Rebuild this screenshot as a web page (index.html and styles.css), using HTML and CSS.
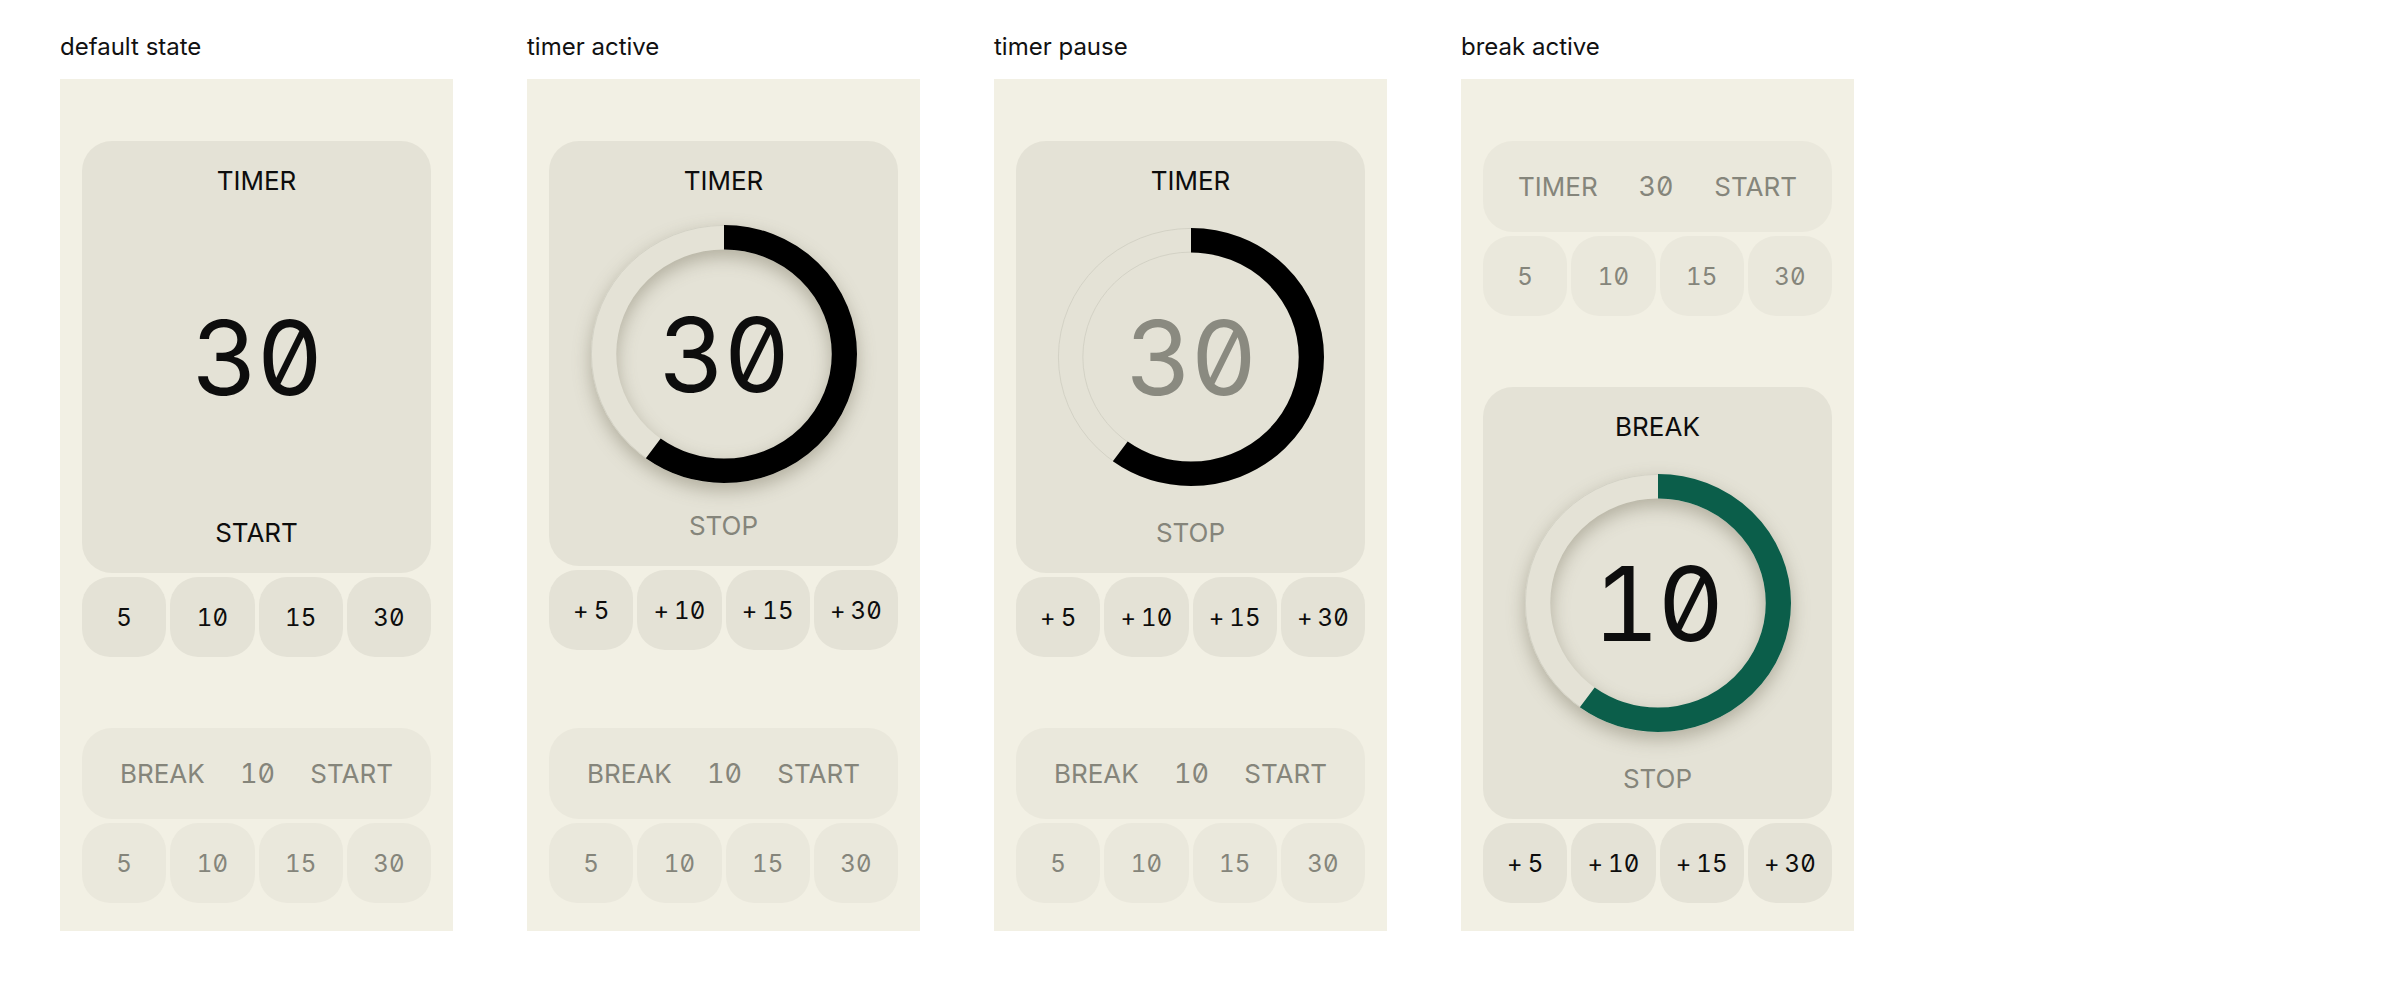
FILE: index.html
```html
<!DOCTYPE html>
<html lang="en">
<head>
<meta charset="utf-8">
<title>Timer states</title>
<link rel="stylesheet" href="styles.css">
</head>
<body>
<div class="board">

  <section class="state">
    <h2 class="label">default state</h2>
    <div class="panel">
      <div class="group">
        <div class="card">
          <div class="title">TIMER</div>
          <div class="body"><span class="big">30</span></div>
          <div class="action">START</div>
        </div>
        <div class="presets">
          <div class="preset">5</div><div class="preset">10</div><div class="preset">15</div><div class="preset">30</div>
        </div>
      </div>
      <div class="group bottom">
        <div class="bar faded"><span>BREAK</span><span class="num">10</span><span>START</span></div>
        <div class="presets faded">
          <div class="preset">5</div><div class="preset">10</div><div class="preset">15</div><div class="preset">30</div>
        </div>
      </div>
    </div>
  </section>

  <section class="state">
    <h2 class="label">timer active</h2>
    <div class="panel">
      <div class="group">
        <div class="card short">
          <div class="title">TIMER</div>
          <div class="body">
            <div class="dial">
              <svg class="ring raised" viewBox="0 0 258 258" preserveAspectRatio="none">
                <circle class="track" cx="129" cy="129" r="116.75"/>
                <circle class="edge" cx="129" cy="129" r="128.6"/>
                <circle class="arc" cx="129" cy="129" r="116.75" pathLength="100" transform="rotate(-90 129 129)"/>
              </svg>
              <span class="big">30</span>
            </div>
          </div>
          <div class="action muted">STOP</div>
        </div>
        <div class="presets">
          <div class="preset"><span class="plus">+</span>5</div><div class="preset"><span class="plus">+</span>10</div><div class="preset"><span class="plus">+</span>15</div><div class="preset"><span class="plus">+</span>30</div>
        </div>
      </div>
      <div class="group bottom">
        <div class="bar faded"><span>BREAK</span><span class="num">10</span><span>START</span></div>
        <div class="presets faded">
          <div class="preset">5</div><div class="preset">10</div><div class="preset">15</div><div class="preset">30</div>
        </div>
      </div>
    </div>
  </section>

  <section class="state">
    <h2 class="label">timer pause</h2>
    <div class="panel">
      <div class="group">
        <div class="card">
          <div class="title">TIMER</div>
          <div class="body">
            <div class="dial">
              <svg class="ring" viewBox="0 0 258 258" preserveAspectRatio="none">
                <circle class="track" cx="129" cy="129" r="116.75"/>
                <circle class="edge" cx="129" cy="129" r="128.6"/>
                <circle class="edge" cx="129" cy="129" r="104.9"/>
                <circle class="arc" cx="129" cy="129" r="116.75" pathLength="100" transform="rotate(-90 129 129)"/>
              </svg>
              <span class="big muted">30</span>
            </div>
          </div>
          <div class="action muted">STOP</div>
        </div>
        <div class="presets">
          <div class="preset"><span class="plus">+</span>5</div><div class="preset"><span class="plus">+</span>10</div><div class="preset"><span class="plus">+</span>15</div><div class="preset"><span class="plus">+</span>30</div>
        </div>
      </div>
      <div class="group bottom">
        <div class="bar faded"><span>BREAK</span><span class="num">10</span><span>START</span></div>
        <div class="presets faded">
          <div class="preset">5</div><div class="preset">10</div><div class="preset">15</div><div class="preset">30</div>
        </div>
      </div>
    </div>
  </section>

  <section class="state">
    <h2 class="label">break active</h2>
    <div class="panel">
      <div class="group">
        <div class="bar faded wide"><span>TIMER</span><span class="num">30</span><span>START</span></div>
        <div class="presets faded">
          <div class="preset">5</div><div class="preset">10</div><div class="preset">15</div><div class="preset">30</div>
        </div>
      </div>
      <div class="group bottom">
        <div class="card">
          <div class="title">BREAK</div>
          <div class="body">
            <div class="dial">
              <svg class="ring raised green" viewBox="0 0 258 258" preserveAspectRatio="none">
                <circle class="track" cx="129" cy="129" r="116.75"/>
                <circle class="edge" cx="129" cy="129" r="128.6"/>
                <circle class="arc" cx="129" cy="129" r="116.75" pathLength="100" transform="rotate(-90 129 129)"/>
              </svg>
              <span class="big">10</span>
            </div>
          </div>
          <div class="action muted">STOP</div>
        </div>
        <div class="presets">
          <div class="preset"><span class="plus">+</span>5</div><div class="preset"><span class="plus">+</span>10</div><div class="preset"><span class="plus">+</span>15</div><div class="preset"><span class="plus">+</span>30</div>
        </div>
      </div>
    </div>
  </section>

</div>
</body>
</html>
```

FILE: styles.css
```css
* { box-sizing: border-box; }

html, body {
  margin: 0;
  background: #ffffff;
}

body {
  font-family: Inter, "Noto Sans", "Liberation Sans", sans-serif;
  color: #0d0d0d;
}

.board {
  display: flex;
  gap: 74px;
  padding: 33px 0 0 60px;
}

.state {
  width: 393px;
}

.label {
  margin: 0 0 18px;
  font-size: 24px;
  line-height: 28px;
  font-weight: 400;
  color: #111111;
}

.panel {
  height: 852px;
  background: #f2f0e4;
  padding: 62px 22px 28px;
  display: flex;
  flex-direction: column;
}

.group {
  display: flex;
  flex-direction: column;
  gap: 4px;
}

.bottom {
  margin-top: auto;
}

.card {
  height: 432px;
  border-radius: 30px;
  background: #e4e2d6;
  padding: 24px 0;
  display: flex;
  flex-direction: column;
  align-items: center;
}

.card.short {
  height: 425px;
}

.title,
.action {
  font-size: 26px;
  line-height: 32px;
}

.muted {
  color: #85857b;
}

.body {
  flex: 1;
  align-self: stretch;
  display: grid;
  place-items: center;
}

.big,
.preset,
.num {
  font-family: Inter, "DejaVu Sans Mono", monospace;
  font-feature-settings: "tnum" 1, "zero" 1;
  font-variant-numeric: tabular-nums slashed-zero;
}

.big {
  font-size: 103px;
  line-height: 104px;
  font-weight: 400;
  letter-spacing: -2px;
  padding-top: 2px;
}

.big.muted {
  color: #8a8a80;
}

.dial {
  display: grid;
  place-items: center;
}

.dial > * {
  grid-area: 1 / 1;
}

.ring {
  width: 266px;
  height: 258px;
  overflow: visible;
}

.ring.raised {
  filter: drop-shadow(0 7px 9px rgba(70, 66, 40, 0.32));
}

.track {
  fill: none;
  stroke: #e4e2d6;
  stroke-width: 24.5;
}

.edge {
  fill: none;
  stroke: #cfcdc1;
  stroke-width: 0.8;
}

.arc {
  fill: none;
  stroke: #000000;
  stroke-width: 24.5;
  stroke-dasharray: 60 40;
}

.ring.green .arc {
  stroke: #0b5e4a;
}

.presets {
  display: grid;
  grid-template-columns: repeat(4, 1fr);
  gap: 4px;
}

.preset {
  height: 80px;
  border-radius: 28px;
  background: #e4e2d6;
  display: flex;
  align-items: center;
  justify-content: center;
  font-size: 24px;
  color: #0d0d0d;
}

.plus {
  margin-right: 5px;
}

.bar {
  height: 91px;
  border-radius: 30px;
  background: #e4e2d6;
  display: flex;
  align-items: center;
  justify-content: space-between;
  padding: 0 38px;
  font-size: 26px;
  line-height: 32px;
}

.bar.wide {
  padding: 0 35px;
}

.num {
  font-size: 27px;
}

.faded .preset,
.bar.faded {
  background: #eae8dc;
  color: #85857b;
}
```
